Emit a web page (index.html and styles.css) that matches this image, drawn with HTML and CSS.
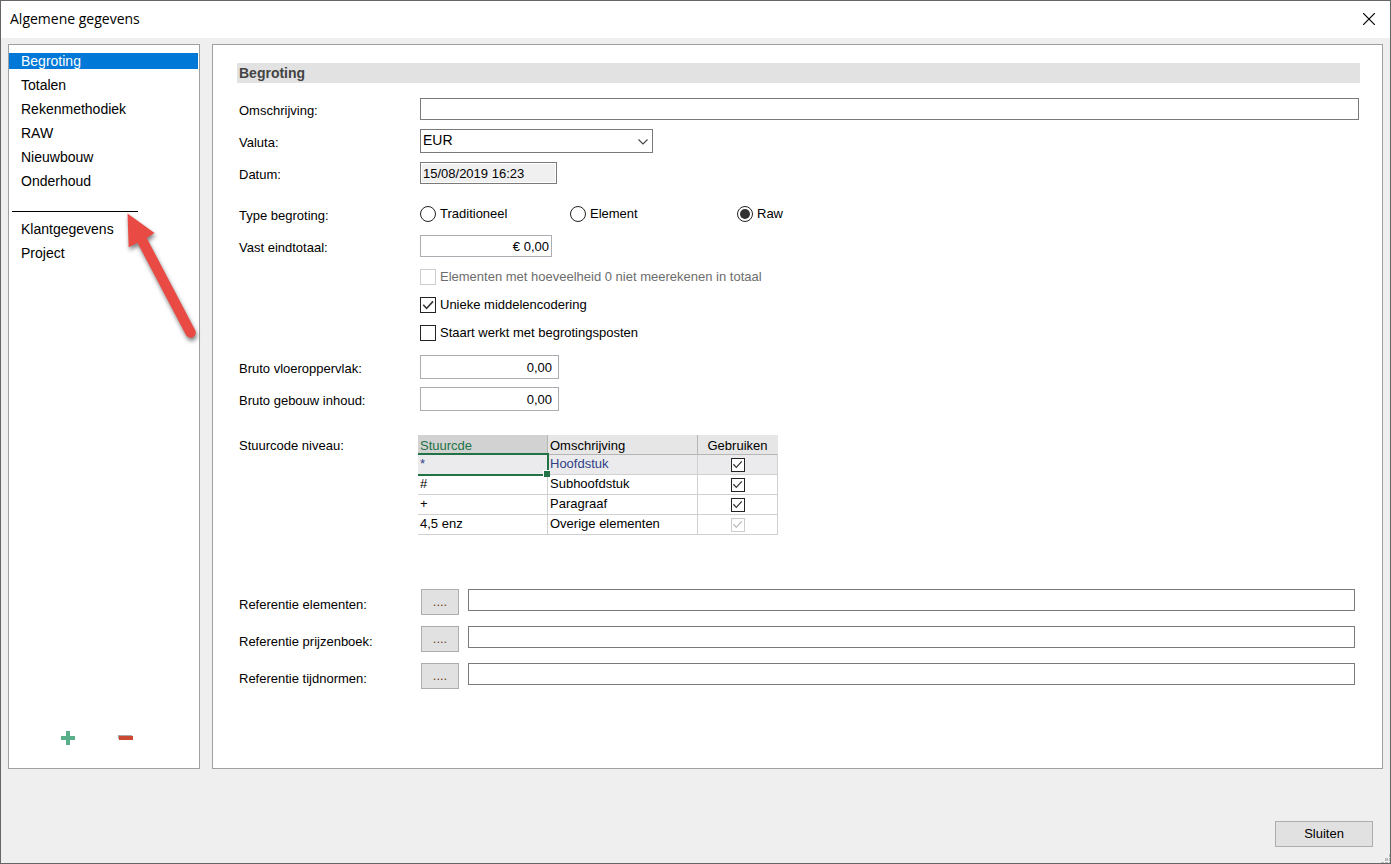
FILE: index.html
```html
<!DOCTYPE html>
<html lang="nl">
<head>
<meta charset="utf-8">
<title>Algemene gegevens</title>
<link rel="stylesheet" href="styles.css">
</head>
<body>
<div class="window">
  <header class="titlebar">
    <h1 class="title">Algemene gegevens</h1>
    <button class="close" type="button" aria-label="Sluiten">
      <svg width="12" height="12" viewBox="0 0 12 12"><path d="M0 0L12 12M12 0L0 12" stroke="#000" stroke-width="1.2"/></svg>
    </button>
  </header>

  <main class="content">
    <nav class="sidebar">
      <ul class="menu">
        <li><button class="menu-item selected" type="button">Begroting</button></li>
        <li><button class="menu-item" type="button">Totalen</button></li>
        <li><button class="menu-item" type="button">Rekenmethodiek</button></li>
        <li><button class="menu-item" type="button">RAW</button></li>
        <li><button class="menu-item" type="button">Nieuwbouw</button></li>
        <li><button class="menu-item" type="button">Onderhoud</button></li>
        <li class="separator"></li>
        <li><button class="menu-item" type="button">Klantgegevens</button></li>
        <li><button class="menu-item" type="button">Project</button></li>
      </ul>
      <svg class="arrow" width="86" height="140" viewBox="120 206 86 140">
        <path d="M127.5 213.500L154.500 233L146.700 237.900L195.200 330.200A5 5 0 0 1 186 335L137.500 242.700L128.700 247.200Z" fill="#e94b44"/>
      </svg>
      <div class="tools">
        <button class="tool" type="button" aria-label="Toevoegen">
          <svg width="14" height="14" viewBox="0 0 14 14"><path d="M5 0H9V5H14V9H9V14H5V9H0V5H5Z" fill="#5aaf8b"/></svg>
        </button>
        <button class="tool" type="button" aria-label="Verwijderen">
          <svg width="15" height="14" viewBox="0 0 15 14"><path d="M0 4H14V8H0Z" fill="#a9a9a9"/><path d="M1 5H15V9H1Z" fill="#cb4a31"/></svg>
        </button>
      </div>
    </nav>

    <form class="panel">
      <h2 class="heading">Begroting</h2>

      <div class="row"><label class="label" for="oms">Omschrijving:</label><input class="field wide" id="oms" type="text"></div>
      <div class="row">
        <label class="label" for="valuta">Valuta:</label>
        <div class="select-box">
          <select class="select" id="valuta"><option>EUR</option></select>
          <svg class="chevron" width="10" height="6" viewBox="0 0 10 6"><path d="M0.500 0.500L5 5L9.500 0.500" fill="none" stroke="#444" stroke-width="1.100"/></svg>
        </div>
      </div>
      <div class="row"><label class="label" for="datum">Datum:</label><input class="field date" id="datum" type="text" value="15/08/2019 16:23" readonly></div>

      <div class="row type-row" role="radiogroup" aria-labelledby="type">
        <span class="label" id="type">Type begroting:</span>
        <div class="radios">
          <label class="option"><input class="radio" type="radio" name="type">Traditioneel</label>
          <label class="option"><input class="radio" type="radio" name="type">Element</label>
          <label class="option"><input class="radio" type="radio" name="type" checked>Raw</label>
        </div>
      </div>
      <div class="row"><label class="label" for="vast">Vast eindtotaal:</label><input class="field amount total" id="vast" type="text" value="€ 0,00"></div>

      <div class="checks">
        <label class="option disabled"><input class="check" type="checkbox" disabled>Elementen met hoeveelheid 0 niet meerekenen in totaal</label>
        <label class="option"><input class="check" type="checkbox" checked>Unieke middelencodering</label>
        <label class="option"><input class="check" type="checkbox">Staart werkt met begrotingsposten</label>
      </div>

      <div class="row"><label class="label" for="vloer">Bruto vloeroppervlak:</label><input class="field amount area" id="vloer" type="text" value="0,00"></div>
      <div class="row"><label class="label" for="inhoud">Bruto gebouw inhoud:</label><input class="field amount area" id="inhoud" type="text" value="0,00"></div>

      <div class="level">
        <span class="label" id="niveau">Stuurcode niveau:</span>
        <table class="grid" aria-labelledby="niveau">
          <thead>
            <tr><th class="code active">Stuurcde</th><th class="desc">Omschrijving</th><th class="use">Gebruiken</th></tr>
          </thead>
          <tbody>
            <tr class="current"><td class="focus">*</td><td>Hoofdstuk</td><td class="use"><input class="check small" type="checkbox" aria-label="Hoofdstuk gebruiken" checked></td></tr>
            <tr><td>#</td><td>Subhoofdstuk</td><td class="use"><input class="check small" type="checkbox" aria-label="Subhoofdstuk gebruiken" checked></td></tr>
            <tr><td>+</td><td>Paragraaf</td><td class="use"><input class="check small" type="checkbox" aria-label="Paragraaf gebruiken" checked></td></tr>
            <tr><td>4,5 enz</td><td>Overige elementen</td><td class="use"><input class="check small" type="checkbox" aria-label="Overige elementen gebruiken" checked disabled></td></tr>
          </tbody>
        </table>
      </div>

      <div class="references">
        <div class="reference"><label class="label" for="elem">Referentie elementen:</label><button class="button browse" type="button">....</button><input class="field wide" id="elem" type="text"></div>
        <div class="reference"><label class="label" for="prijs">Referentie prijzenboek:</label><button class="button browse" type="button">....</button><input class="field wide" id="prijs" type="text"></div>
        <div class="reference"><label class="label" for="tijd">Referentie tijdnormen:</label><button class="button browse" type="button">....</button><input class="field wide" id="tijd" type="text"></div>
      </div>
    </form>
  </main>

  <footer class="footer">
    <button class="button dismiss" type="button">Sluiten</button>
    <svg class="grip" width="9" height="9" viewBox="0 0 9 9"><path d="M8 0H9V3H8ZM4 4H7V7H4ZM8 4H9V7H8ZM0 8H3V9H0ZM4 8H7V9H4ZM8 8H9V9H8Z" fill="#bdbdbd"/></svg>
  </footer>
</div>
</body>
</html>
```
FILE: styles.css
```css
* {
  box-sizing: border-box;
}

body {
  margin: 0;
  font: 13px/16px "Liberation Sans", Arial, sans-serif;
  color: #000;
}

button,
input,
select {
  font: inherit;
  color: inherit;
  margin: 0;
}

.window {
  display: flex;
  flex-direction: column;
  min-height: 100vh;
  border: 1px solid #666;
  background: #efefef;
}

.titlebar {
  display: flex;
  align-items: center;
  justify-content: space-between;
  height: 37px;
  padding: 0 15px 1px 9px;
  background: #fff;
}

.title {
  margin: 0;
  font: 14px/20px "Open Sans", "Noto Sans", sans-serif;
}

.close,
.tool {
  display: flex;
  padding: 0;
  border: 0;
  background: none;
}

.content {
  flex: 1;
  display: grid;
  grid-template-columns: 192px 1fr;
  gap: 12px;
  padding: 6px 7px 0;
}

.sidebar,
.panel {
  border: 1px solid #a0a0a0;
  background: #fff;
}

.sidebar {
  position: relative;
  display: flex;
  flex-direction: column;
  justify-content: space-between;
  padding: 8px 1px 23px 0;
}

.menu {
  display: flex;
  flex-direction: column;
  gap: 8px;
  margin: 0;
  padding: 0;
  list-style: none;
}

.menu-item {
  display: block;
  width: 100%;
  height: 16px;
  padding: 0 12px;
  border: 0;
  background: none;
  font-size: 14px;
  line-height: 16px;
  text-align: left;
}

.menu-item.selected {
  background: #0078d7;
  color: #fff;
}

.separator {
  width: 126px;
  height: 16px;
  margin-left: 3px;
  background: linear-gradient(#000, #000) 0 14px / 100% 1px no-repeat;
}

.arrow {
  position: absolute;
  left: 111px;
  top: 161px;
  filter: drop-shadow(1px 3px 2px rgba(0, 0, 0, 0.5));
  pointer-events: none;
}

.tools {
  display: flex;
  gap: 43px;
  padding-left: 52px;
}

.panel {
  padding: 18px 22px 16px 24px;
}

.heading {
  margin: 0 0 10px;
  padding: 0 2px;
  background: #e2e2e2;
  color: #444;
  font-size: 14px;
  line-height: 20px;
}

.row {
  display: flex;
  align-items: center;
  min-height: 32px;
  padding: 0 1px 0 2px;
}

.type-row {
  margin-top: 9px;
}

.label {
  flex: none;
  width: 181px;
}

.row .label {
  padding-top: 3px;
}

.field {
  height: 22px;
  padding: 0 2px;
  border: 1px solid #7a7a7a;
  border-radius: 0;
  background: #fff;
}

.wide {
  flex: 1;
  min-width: 0;
}

.date {
  width: 137px;
  background: #f0f0f0;
  box-shadow: inset 0 0 0 1px #fff;
}

.amount {
  border-color: #abadb3;
  text-align: right;
}

.total {
  width: 132px;
}

.area {
  width: 139px;
  height: 24px;
  padding-right: 6px;
}

.select-box {
  position: relative;
  width: 233px;
}

.select {
  display: block;
  width: 100%;
  height: 24px;
  padding: 0 24px 2px 2px;
  border: 1px solid #7a7a7a;
  border-radius: 0;
  background: #fff;
  appearance: none;
  font-size: 14px;
}

.chevron {
  position: absolute;
  right: 5px;
  top: 10px;
  pointer-events: none;
}

.radios {
  display: grid;
  grid-template-columns: 150px 167px auto;
}

.option {
  display: flex;
  align-items: center;
  gap: 4px;
}

.option.disabled {
  color: #6d6d6d;
}

.radio,
.check {
  flex: none;
  width: 16px;
  height: 16px;
  border: 1px solid #222;
  background: #fff;
  color: #333;
  appearance: none;
}

.radio {
  border-radius: 50%;
}

.radio:checked::before {
  content: "";
  display: block;
  width: 10px;
  height: 10px;
  margin: 2px;
  border-radius: 50%;
  background: currentColor;
}

.check:checked::before {
  content: "";
  display: block;
  height: 100%;
  background: currentColor;
  clip-path: polygon(12% 52%, 20% 44%, 40% 66%, 82% 20%, 90% 28%, 40% 82%);
}

.check:disabled {
  border-color: #ccc;
  color: #bbb;
}

.check.small {
  display: block;
  width: 14px;
  height: 14px;
  margin: 0 auto;
}

.checks {
  display: grid;
  grid-auto-rows: 28px;
  margin: 1px 0 4px;
  padding-left: 183px;
}

.level {
  display: flex;
  align-items: flex-start;
  margin-top: 20px;
  padding-left: 2px;
}

.level .label {
  width: 179px;
  padding-top: 3px;
}

.grid {
  width: 360px;
  border-collapse: separate;
  border-spacing: 0;
  table-layout: fixed;
}

.grid th,
.grid td {
  height: 20px;
  padding: 0 2px 2px;
  border: solid #d0d0d0;
  border-width: 0 1px 1px 0;
  font-weight: normal;
  line-height: 16px;
  text-align: left;
}

.grid th {
  padding: 2px 2px 0;
  background: #e6e6e6;
  border-color: #b5b5b5;
}

.grid th:last-child {
  border-right-color: #e6e6e6;
}

.grid .active {
  background: #d2d2d2;
  color: #217346;
}

.grid .code {
  width: 130px;
}

.grid .desc {
  width: 150px;
}

.grid .use {
  text-align: center;
}

.grid td.use {
  padding: 0;
}

.current td {
  background: #ebebed;
  color: #2f3f86;
}

.grid .focus {
  position: relative;
}

/* Selection outline with its fill handle */
.focus::before {
  content: "";
  position: absolute;
  inset: -2px -2px -2px 0;
  border: solid #217346;
  border-width: 2px 2px 2px 0;
}

.focus::after {
  content: "";
  position: absolute;
  right: -3px;
  bottom: -3px;
  width: 6px;
  height: 6px;
  border: solid #fff;
  border-width: 1px 0 0 1px;
  background: #217346;
}

.references {
  display: grid;
  gap: 11px;
  margin-top: 54px;
}

.reference {
  display: flex;
  align-items: flex-start;
  padding: 0 5px 0 2px;
}

.reference .label {
  width: 182px;
  padding-top: 8px;
}

.button {
  height: 26px;
  padding: 0;
  border: 1px solid #adadad;
  background: #e1e1e1;
}

.browse {
  width: 38px;
  margin-right: 9px;
  color: #6b3f1d;
}

.footer {
  position: relative;
  display: flex;
  justify-content: flex-end;
  padding: 52px 17px 16px;
}

.dismiss {
  width: 98px;
}

.grip {
  position: absolute;
  right: 0;
  bottom: 0;
}
```
